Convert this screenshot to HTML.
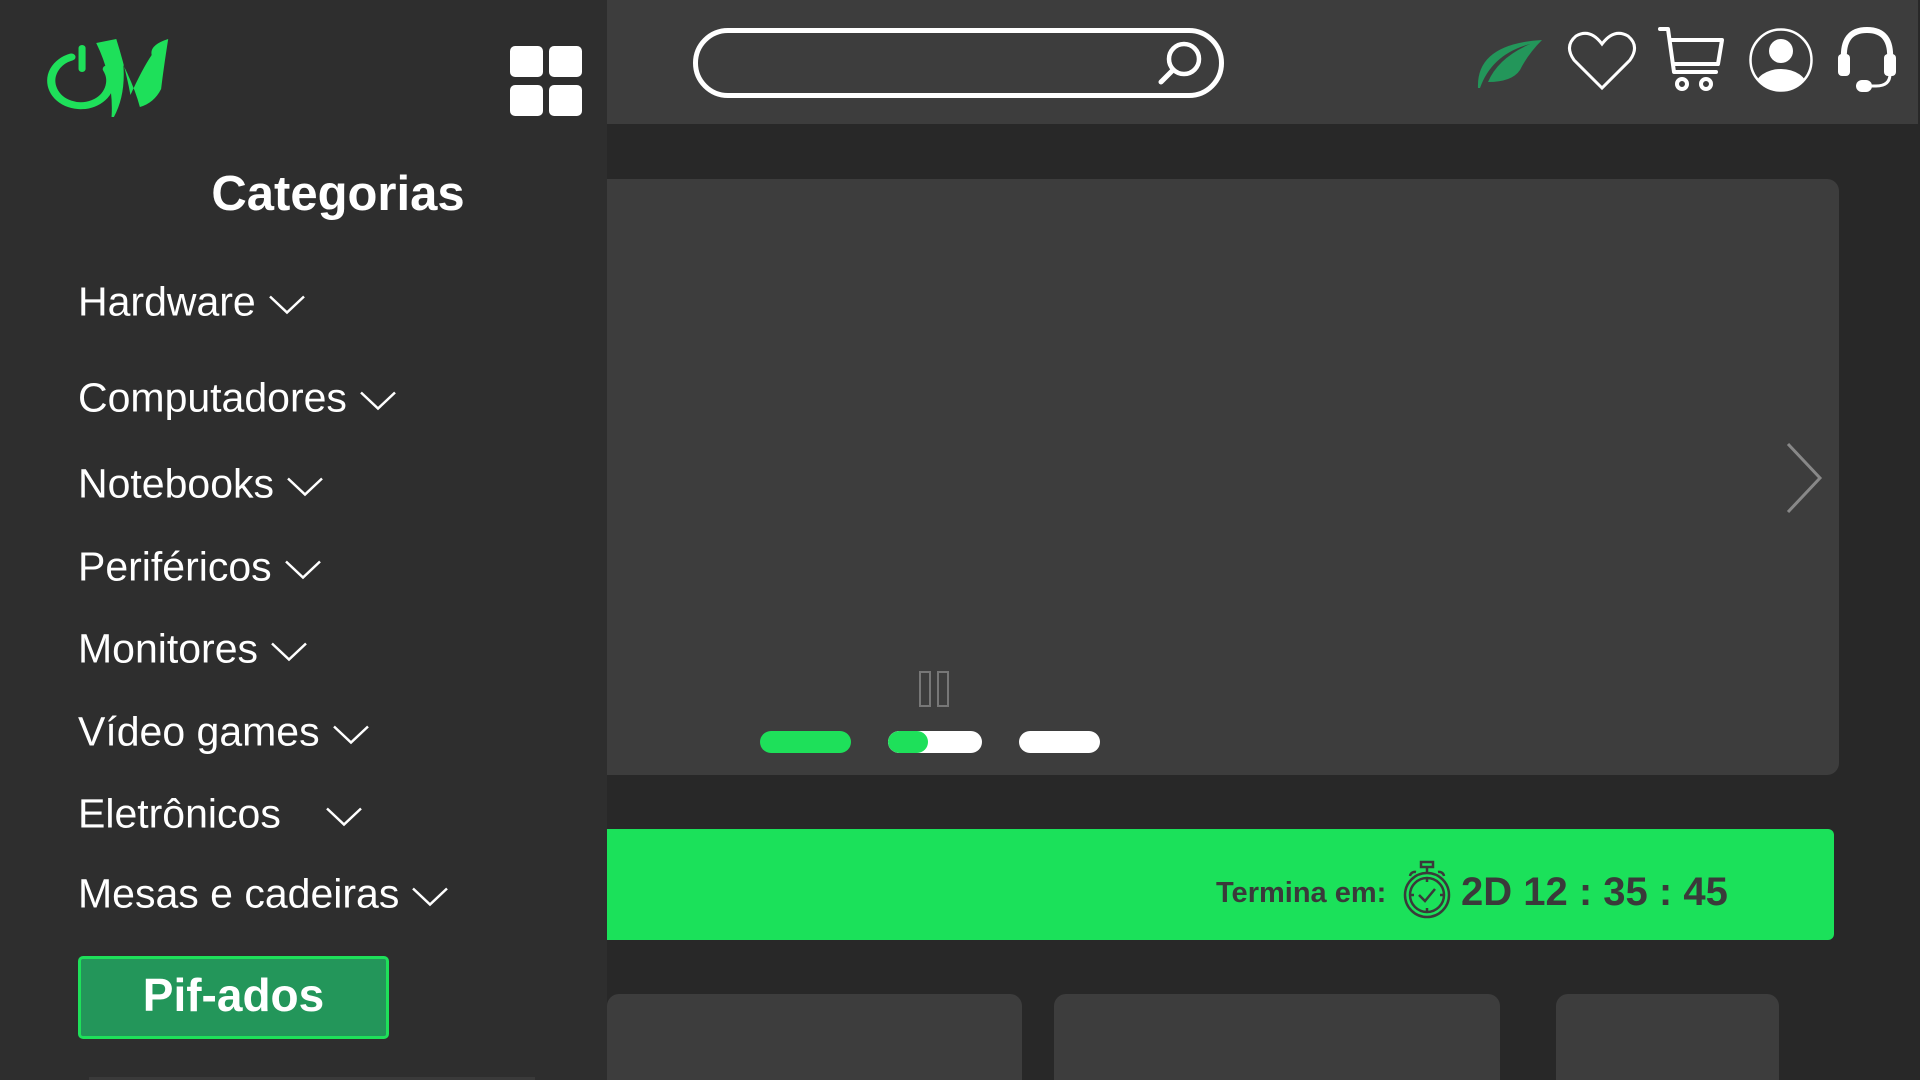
<!DOCTYPE html>
<html><head><meta charset="utf-8"><style>
*{margin:0;padding:0;box-sizing:border-box}
body{width:1920px;height:1080px;overflow:hidden;background:#282828;font-family:"Liberation Sans",sans-serif;position:relative}
.a{position:absolute}
#side{left:0;top:0;width:607px;height:1080px;background:#2e2e2e}
.mi{position:absolute;left:78px;color:#fff;font-size:41px;line-height:1;transform:translateY(-50%);white-space:nowrap}
.mi svg{vertical-align:middle;margin-left:12px}
.card{background:#3d3d3d;border-radius:12px 12px 0 0}
</style></head><body>
<div id="side" class="a">
  <svg class="a" style="left:0;top:0" width="200" height="130" viewBox="0 0 200 130">
   <g transform="translate(3 -1) scale(1.18 1)">
    <path d="M58 58 A25 25 0 1 0 88 70" fill="none" stroke="#1ee05a" stroke-width="7" stroke-linecap="round"/>
    <rect x="64" y="46" width="6" height="27" rx="3" fill="#1ee05a"/>
    <path d="M79 44 L96 40 Q104 70 108 96 Q118 70 126 56 Q124 46 140 40 Q136 70 134 90 Q128 104 116 108 Q112 90 102 66 Q104 96 94 118 L92 118 Q94 80 79 44Z" fill="#1ee05a"/>
   </g>
  </svg>
  <div class="a" style="left:510px;top:46px;width:33px;height:31px;background:#fff;border-radius:5px"></div>
  <div class="a" style="left:549px;top:46px;width:33px;height:31px;background:#fff;border-radius:5px"></div>
  <div class="a" style="left:510px;top:85px;width:33px;height:31px;background:#fff;border-radius:5px"></div>
  <div class="a" style="left:549px;top:85px;width:33px;height:31px;background:#fff;border-radius:5px"></div>
  <div class="a" style="left:0;width:676px;top:166px;text-align:center;color:#fff;font-weight:bold;font-size:49px">Categorias</div>
  <div class="mi" style="top:302px">Hardware<svg width="38" height="22"><path d="M2 3 L19 19 L36 3" fill="none" stroke="#fff" stroke-width="2.5"/></svg></div>
  <div class="mi" style="top:398px">Computadores<svg width="38" height="22"><path d="M2 3 L19 19 L36 3" fill="none" stroke="#fff" stroke-width="2.5"/></svg></div>
  <div class="mi" style="top:484px">Notebooks<svg width="38" height="22"><path d="M2 3 L19 19 L36 3" fill="none" stroke="#fff" stroke-width="2.5"/></svg></div>
  <div class="mi" style="top:567px">Periféricos<svg width="38" height="22"><path d="M2 3 L19 19 L36 3" fill="none" stroke="#fff" stroke-width="2.5"/></svg></div>
  <div class="mi" style="top:649px">Monitores<svg width="38" height="22"><path d="M2 3 L19 19 L36 3" fill="none" stroke="#fff" stroke-width="2.5"/></svg></div>
  <div class="mi" style="top:732px">Vídeo games<svg width="38" height="22"><path d="M2 3 L19 19 L36 3" fill="none" stroke="#fff" stroke-width="2.5"/></svg></div>
  <div class="mi" style="top:814px">Eletrônicos<svg width="38" height="22" style="margin-left:44px"><path d="M2 3 L19 19 L36 3" fill="none" stroke="#fff" stroke-width="2.5"/></svg></div>
  <div class="mi" style="top:894px">Mesas e cadeiras<svg width="38" height="22"><path d="M2 3 L19 19 L36 3" fill="none" stroke="#fff" stroke-width="2.5"/></svg></div>
  <div class="a" style="left:78px;top:956px;width:311px;height:83px;background:#23965a;border:3px solid #1ee05a;border-radius:5px;color:#fff;font-weight:bold;font-size:46px;text-align:center;line-height:72px">Pif-ados</div>
  <div class="a" style="left:89px;top:1077px;width:446px;height:3px;background:#3a3a3a"></div>
</div>
<div class="a" style="left:607px;top:0;width:1311px;height:124px;background:#3d3d3d"></div>
<div class="a" style="left:693px;top:28px;width:531px;height:70px;border:5px solid #fff;border-radius:35px"></div>
<svg class="a" style="left:1156px;top:38px" width="50" height="50" viewBox="0 0 50 50"><circle cx="28" cy="21" r="15" fill="none" stroke="#fff" stroke-width="4.5"/><path d="M17 32 L5 44" stroke="#fff" stroke-width="5" stroke-linecap="round"/></svg>
<svg class="a" style="left:1474px;top:34px" width="72" height="56" viewBox="0 0 72 56"><path d="M4 54 Q2 10 68 6 Q54 20 46 36 Q38 48 14 48 Q24 24 56 10 Q18 20 6 54Z" fill="#23965a"/></svg>
<svg class="a" style="left:1566px;top:30px" width="72" height="62" viewBox="0 0 72 62"><path d="M36 58 L8 30 Q-2 16 10 6 Q24 -2 36 14 Q48 -2 62 6 Q74 16 64 30Z" fill="none" stroke="#fff" stroke-width="3"/></svg>
<svg class="a" style="left:1658px;top:26px" width="70" height="66" viewBox="0 0 70 66"><path d="M2 3 L10 3 L16 46 L58 46" fill="none" stroke="#fff" stroke-width="4" stroke-linecap="round" stroke-linejoin="round"/><path d="M12 14 L64 14 L60 38 L16 38" fill="none" stroke="#fff" stroke-width="4" stroke-linejoin="round"/><circle cx="24" cy="58" r="5" fill="none" stroke="#fff" stroke-width="4"/><circle cx="48" cy="58" r="5" fill="none" stroke="#fff" stroke-width="4"/></svg>
<svg class="a" style="left:1748px;top:27px" width="66" height="66" viewBox="0 0 66 66"><defs><clipPath id="c"><circle cx="33" cy="33" r="30"/></clipPath></defs><circle cx="33" cy="33" r="30.5" fill="none" stroke="#fff" stroke-width="2.5"/><circle cx="33" cy="24" r="12" fill="#fff"/><ellipse cx="33" cy="60" rx="26" ry="18" fill="#fff" clip-path="url(#c)"/></svg>
<svg class="a" style="left:1834px;top:26px" width="66" height="68" viewBox="0 0 66 68"><path d="M10 34 Q8 4 33 4 Q58 4 56 34" fill="none" stroke="#fff" stroke-width="6"/><rect x="4" y="28" width="12" height="22" rx="4" fill="#fff"/><rect x="50" y="28" width="12" height="22" rx="4" fill="#fff"/><path d="M56 48 Q56 60 42 60 L34 60" fill="none" stroke="#fff" stroke-width="3"/><rect x="22" y="54" width="16" height="12" rx="6" fill="#fff"/></svg>
<div class="a" style="left:607px;top:179px;width:1232px;height:596px;background:#3d3d3d;border-radius:0 12px 12px 0"></div>
<svg class="a" style="left:1784px;top:440px" width="42" height="76"><path d="M4 4 L36 38 L4 72" fill="none" stroke="#888" stroke-width="3"/></svg>
<div class="a" style="left:919px;top:671px;width:12px;height:36px;border:2px solid #777"></div>
<div class="a" style="left:937px;top:671px;width:12px;height:36px;border:2px solid #777"></div>
<div class="a" style="left:760px;top:731px;width:91px;height:22px;background:#1ee05a;border-radius:11px"></div>
<div class="a" style="left:888px;top:731px;width:94px;height:22px;background:#fff;border-radius:11px;overflow:hidden"><div style="width:40px;height:22px;background:#1ee05a;border-radius:11px"></div></div>
<div class="a" style="left:1019px;top:731px;width:81px;height:22px;background:#fff;border-radius:11px"></div>
<div class="a" style="left:607px;top:829px;width:1227px;height:111px;background:#1be15a;border-radius:0 6px 6px 0"></div>
<div class="a" style="left:1216px;top:877px;color:#3a3a3a;font-weight:bold;font-size:29px">Termina em:</div>
<svg class="a" style="left:1401px;top:860px" width="52" height="60" viewBox="0 0 50 60"><g fill="none" stroke="#3a3a3a" stroke-width="2.5"><rect x="19" y="2" width="12" height="5"/><path d="M25 7 V12"/><circle cx="25" cy="35" r="22"/><circle cx="25" cy="35" r="17"/><path d="M8 16 A5 5 0 0 1 14 12 M42 16 A5 5 0 0 0 36 12"/><path d="M17 35 L23 41 L33 29"/><path d="M25 19 V22 M25 48 V51 M9 35 H12 M38 35 H41"/></g></svg>
<div class="a" style="left:1461px;top:870px;color:#3a3a3a;font-weight:bold;font-size:40px;white-space:nowrap">2D 12 : 35 : 45</div>
<div class="a card" style="left:607px;top:994px;width:415px;height:86px"></div>
<div class="a card" style="left:1054px;top:994px;width:446px;height:86px"></div>
<div class="a card" style="left:1556px;top:994px;width:223px;height:86px"></div>
</body></html>
